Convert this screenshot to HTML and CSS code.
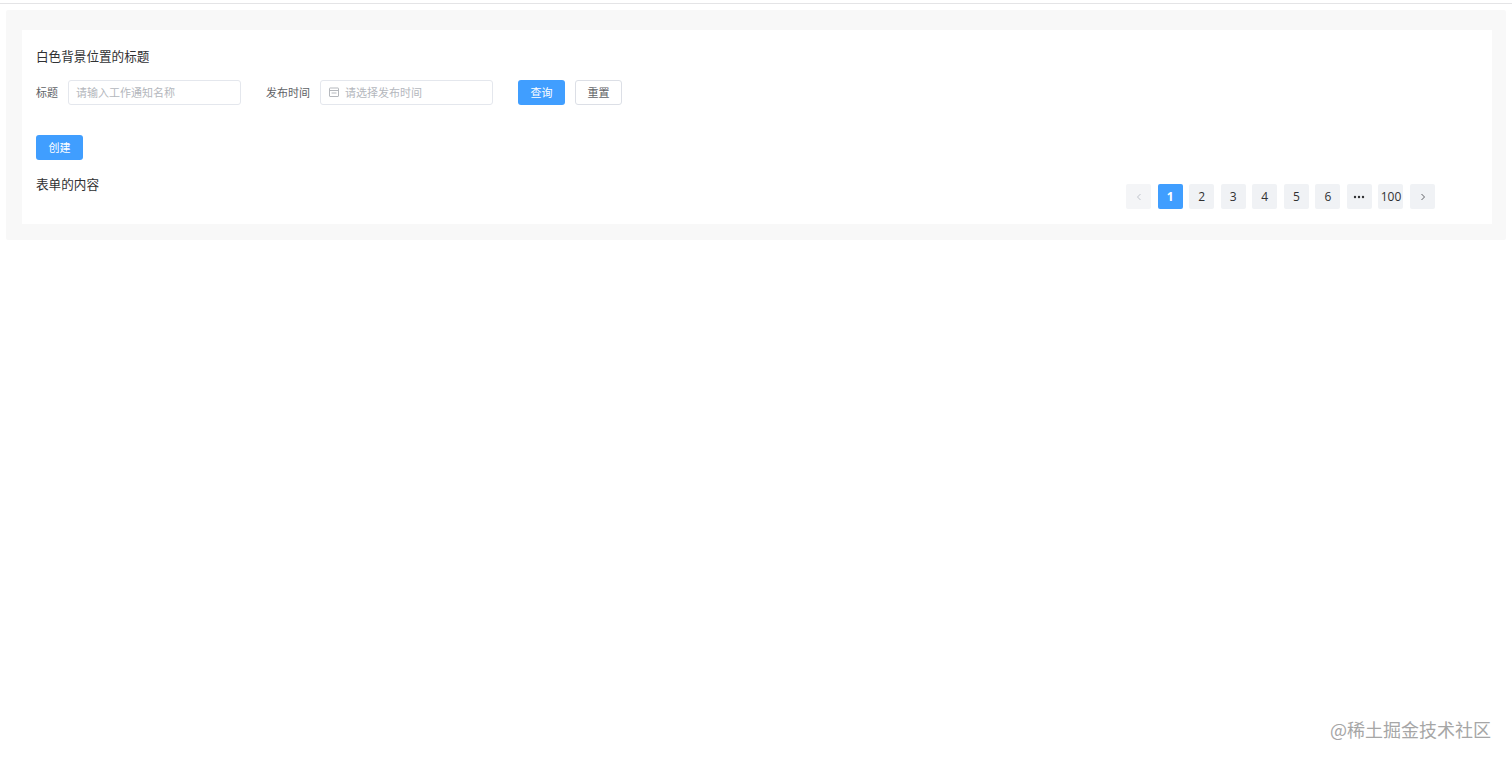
FILE: index.html
```html
<!DOCTYPE html>
<html lang="zh">
<head>
<meta charset="utf-8">
<title>表单</title>
<link rel="stylesheet" href="styles.css">
</head>
<body>
<div class="topline"></div>
<div class="outer">
  <div class="card">
    <div class="title">白色背景位置的标题</div>
    <form class="filters">
      <label class="label">标题</label>
      <div class="input input-name"><span class="ph">请输入工作通知名称</span></div>
      <label class="label label-date">发布时间</label>
      <div class="input input-date">
        <svg class="cal" width="10" height="10" viewBox="0 0 10 10" fill="none" stroke="#b5b8bd" stroke-width="1"><rect x=".5" y="1" width="9" height="8.5" rx=".5"/><path d="M.5 3.5h9M2.5 6h5"/></svg>
        <span class="ph">请选择发布时间</span>
      </div>
      <div class="btn primary btn-query">查询</div>
      <div class="btn plain">重置</div>
    </form>
    <div class="btn primary btn-create">创建</div>
    <div class="bottom">
      <div class="content">表单的内容</div>
      <div class="pager">
        <div class="pg disabled"><svg width="8" height="10" viewBox="0 0 8 10" fill="none" stroke="#c0c4cc"><path d="M5.5 2 2.5 5l3 3"/></svg></div>
        <div class="pg active">1</div>
        <div class="pg">2</div>
        <div class="pg">3</div>
        <div class="pg">4</div>
        <div class="pg">5</div>
        <div class="pg">6</div>
        <div class="pg"><svg width="12" height="4" viewBox="0 0 12 4" fill="#303133"><circle cx="2" cy="2" r="1.2"/><circle cx="6" cy="2" r="1.2"/><circle cx="10" cy="2" r="1.2"/></svg></div>
        <div class="pg">100</div>
        <div class="pg"><svg width="8" height="10" viewBox="0 0 8 10" fill="none" stroke="#606266"><path d="M2.5 2l3 3-3 3"/></svg></div>
      </div>
    </div>
  </div>
</div>
<div class="watermark">@稀土掘金技术社区</div>
</body>
</html>
```
FILE: styles.css
```css
* { box-sizing: border-box; }
html, body { margin: 0; height: 100%; }
body {
  position: relative;
  background: #fff;
  overflow: hidden;
  font-family: "Noto Sans CJK SC", "Noto Sans", sans-serif;
  color: #303133;
  padding: 3px 6px 0;
}
.topline { height: 1px; margin: 0 -6px; background: #e4e4e6; }
.outer {
  margin-top: 6px;
  width: 1500px;
  height: 230px;
  background: #f8f8f8;
  border-radius: 2px;
  padding: 20px 14px 16px 16px;
}
.card {
  height: 194px;
  background: #fff;
  padding: 17px 57px 0 14px;
}
.title { font-size: 12.6px; line-height: 18px; color: #303133; }
.filters { display: flex; align-items: center; margin-top: 15px; height: 25px; }
.label { font-size: 11px; color: #606266; margin-right: 10px; padding-bottom: 1px; }
.label-date { margin-left: 25px; }
.input {
  display: flex;
  align-items: center;
  width: 173px;
  height: 25px;
  border: 1px solid #e4e7ed;
  border-radius: 3px;
  padding: 0 0 2px 7px;
  font-size: 11px;
}
.ph { color: #b4b7bd; }
.cal { margin: 0 6px 0 1px; flex: none; }
.btn {
  display: flex;
  align-items: center;
  justify-content: center;
  width: 47px;
  height: 25px;
  border-radius: 3px;
  padding-bottom: 1px;
  font-size: 11px;
}
.primary { background: #409eff; color: #fff; }
.plain { border: 1px solid #dcdfe6; color: #606266; margin-left: 10px; }
.btn-query { margin-left: 25px; }
.btn-create { margin-top: 30px; }
.bottom { display: flex; justify-content: space-between; align-items: flex-start; margin-top: 15px; }
.content { font-size: 12.6px; line-height: 18px; color: #303133; }
.pager { display: flex; gap: 6.55px; margin-top: 9px; }
.pg {
  display: flex;
  align-items: center;
  justify-content: center;
  width: 25px;
  height: 25px;
  background: #f0f2f5;
  border-radius: 2px;
  font-family: "Open Sans", "Noto Sans", sans-serif;
  font-size: 12px;
  color: #303133;
}
.pg.active { background: #409eff; color: #fff; font-weight: 700; }
.pg.disabled { background: #f4f5f7; }
.watermark {
  position: absolute;
  right: 21px;
  top: 718px;
  font-size: 18px;
  line-height: 22px;
  color: #a6a6a6;
}
```
